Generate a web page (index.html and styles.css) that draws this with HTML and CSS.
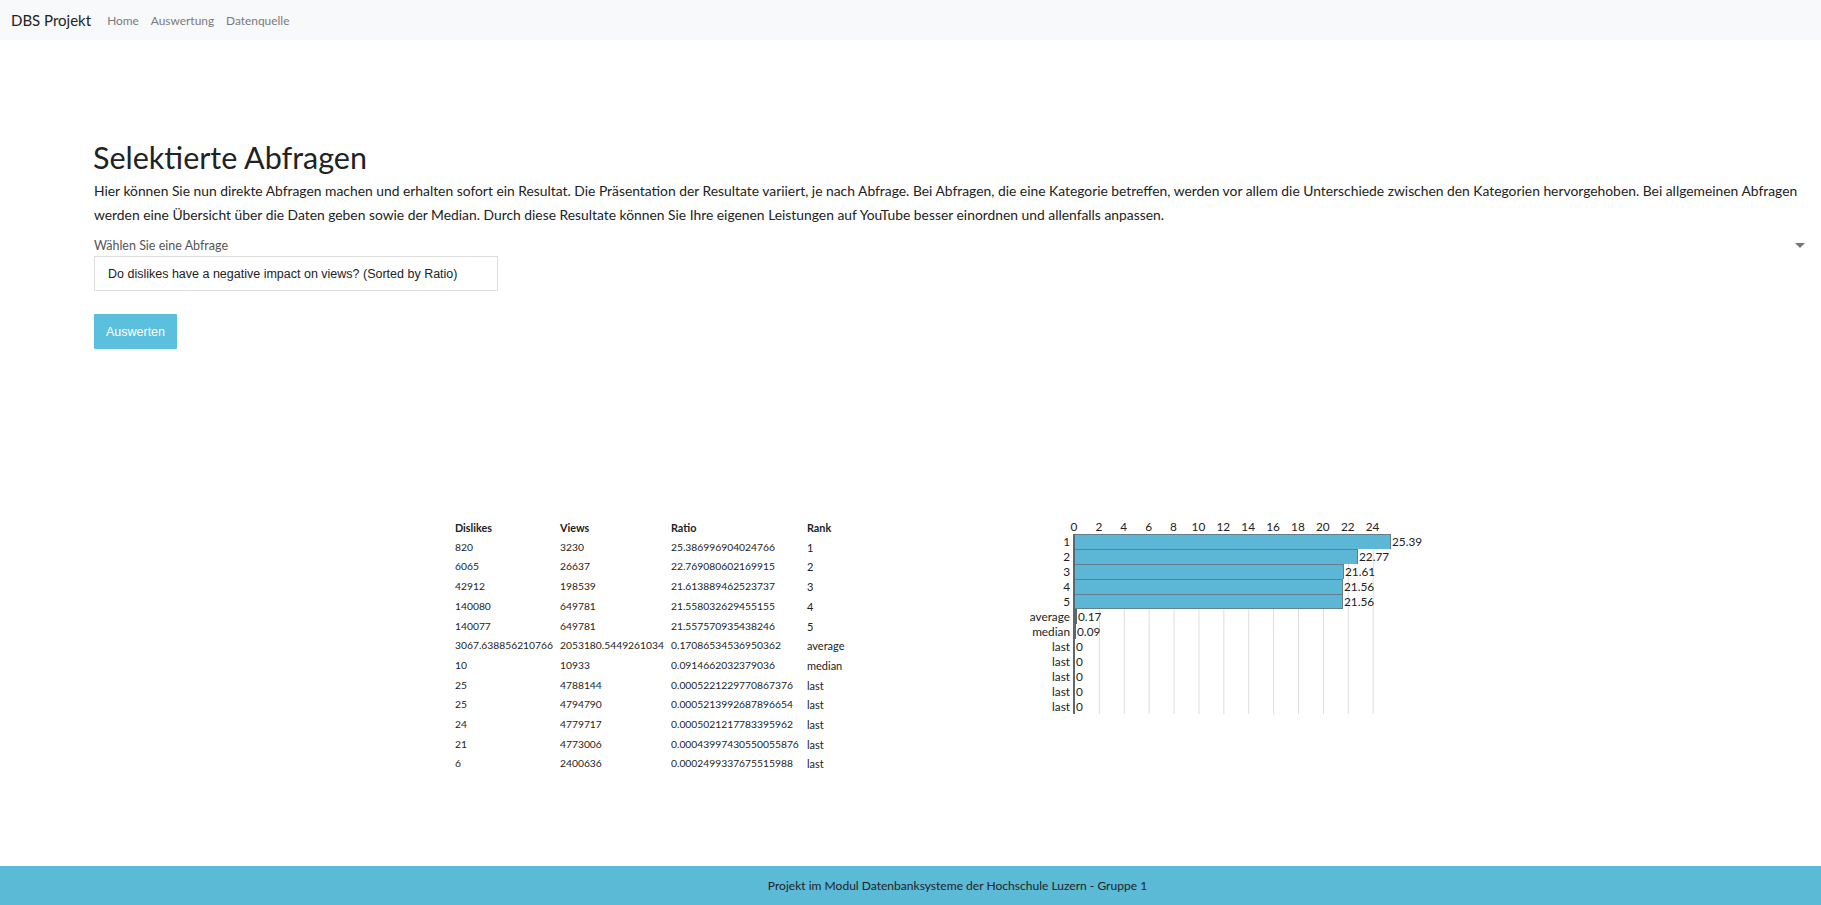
FILE: index.html
```html
<!DOCTYPE html>
<html lang="de">
<head>
<meta charset="utf-8">
<title>DBS Projekt</title>
<link rel="stylesheet" href="styles.css">
</head>
<body>
<nav class="navbar">
  <span class="brand">DBS Projekt</span>
  <a class="nav-link" href="#">Home</a>
  <a class="nav-link" href="#">Auswertung</a>
  <a class="nav-link" href="#">Datenquelle</a>
</nav>

<main class="main">
  <h1 class="title">Selektierte Abfragen</h1>
  <p class="lead">Hier können Sie nun direkte Abfragen machen und erhalten sofort ein Resultat. Die Präsentation der Resultate variiert, je nach Abfrage. Bei Abfragen, die eine Kategorie betreffen, werden vor allem die Unterschiede zwischen den Kategorien hervorgehoben. Bei allgemeinen Abfragen werden eine Übersicht über die Daten geben sowie der Median. Durch diese Resultate können Sie Ihre eigenen Leistungen auf YouTube besser einordnen und allenfalls anpassen.</p>

  <div class="label-row">
    <span class="label">Wählen Sie eine Abfrage</span>
    <span class="caret"></span>
  </div>
  <div class="select-box">Do dislikes have a negative impact on views? (Sorted by Ratio)</div>
  <button class="btn">Auswerten</button>

  <section class="results">
    <table class="data-table">
      <colgroup>
        <col class="c1"><col class="c2"><col class="c3"><col class="c4">
      </colgroup>
      <thead>
        <tr><th>Dislikes</th><th>Views</th><th>Ratio</th><th>Rank</th></tr>
      </thead>
      <tbody>
        <tr><td>820</td><td>3230</td><td>25.386996904024766</td><td>1</td></tr>
        <tr><td>6065</td><td>26637</td><td>22.769080602169915</td><td>2</td></tr>
        <tr><td>42912</td><td>198539</td><td>21.613889462523737</td><td>3</td></tr>
        <tr><td>140080</td><td>649781</td><td>21.558032629455155</td><td>4</td></tr>
        <tr><td>140077</td><td>649781</td><td>21.557570935438246</td><td>5</td></tr>
        <tr><td>3067.638856210766</td><td>2053180.5449261034</td><td>0.17086534536950362</td><td>average</td></tr>
        <tr><td>10</td><td>10933</td><td>0.0914662032379036</td><td>median</td></tr>
        <tr><td>25</td><td>4788144</td><td>0.0005221229770867376</td><td>last</td></tr>
        <tr><td>25</td><td>4794790</td><td>0.0005213992687896654</td><td>last</td></tr>
        <tr><td>24</td><td>4779717</td><td>0.0005021217783395962</td><td>last</td></tr>
        <tr><td>21</td><td>4773006</td><td>0.00043997430550055876</td><td>last</td></tr>
        <tr><td>6</td><td>2400636</td><td>0.0002499337675515988</td><td>last</td></tr>
      </tbody>
    </table>

    <div class="chart">
      <div class="ticks">
        <span>0</span><span>2</span><span>4</span><span>6</span><span>8</span><span>10</span><span>12</span><span>14</span><span>16</span><span>18</span><span>20</span><span>22</span><span>24</span>
      </div>
      <div class="chart-row"><span class="cat">1</span><div class="plot"><div class="bar" style="width:316px"></div><span class="val">25.39</span></div></div>
      <div class="chart-row"><span class="cat">2</span><div class="plot"><div class="bar" style="width:283px"></div><span class="val">22.77</span></div></div>
      <div class="chart-row"><span class="cat">3</span><div class="plot"><div class="bar" style="width:269px"></div><span class="val">21.61</span></div></div>
      <div class="chart-row"><span class="cat">4</span><div class="plot"><div class="bar" style="width:268px"></div><span class="val">21.56</span></div></div>
      <div class="chart-row"><span class="cat">5</span><div class="plot"><div class="bar bar-end" style="width:268px"></div><span class="val">21.56</span></div></div>
      <div class="chart-row"><span class="cat">average</span><div class="plot"><div class="bar bar-tiny" style="width:2px"></div><span class="val">0.17</span></div></div>
      <div class="chart-row"><span class="cat">median</span><div class="plot"><div class="bar bar-tiny" style="width:1px"></div><span class="val">0.09</span></div></div>
      <div class="chart-row"><span class="cat">last</span><div class="plot"><span class="val">0</span></div></div>
      <div class="chart-row"><span class="cat">last</span><div class="plot"><span class="val">0</span></div></div>
      <div class="chart-row"><span class="cat">last</span><div class="plot"><span class="val">0</span></div></div>
      <div class="chart-row"><span class="cat">last</span><div class="plot"><span class="val">0</span></div></div>
      <div class="chart-row"><span class="cat">last</span><div class="plot"><span class="val">0</span></div></div>
    </div>
  </section>
</main>

<footer class="footer">Projekt im Modul Datenbanksysteme der Hochschule Luzern - Gruppe 1</footer>
</body>
</html>
```

FILE: styles.css
```css
* { box-sizing: border-box; }

html, body {
  margin: 0;
  padding: 0;
}

body {
  font-family: "Lato", "Open Sans", sans-serif;
  color: #222;
  background: #fff;
  min-height: 100vh;
  display: flex;
  flex-direction: column;
}

.navbar {
  height: 40px;
  background: #f8f9fa;
  display: flex;
  align-items: center;
  padding-left: 11px;
  gap: 12px;
}

.brand {
  font-size: 15px;
  color: #222;
  margin-right: 4px;
}

.nav-link {
  font-size: 11.9px;
  color: #7a7a7a;
  text-decoration: none;
}

.main {
  flex: 1;
  padding: 0 15px 0 94px;
}

.title {
  font-size: 30.5px;
  font-weight: 400;
  line-height: 38px;
  margin: 98px 0 0 -1px;
  color: #222;
}

.lead {
  font-size: 13.85px;
  line-height: 24px;
  margin: 3px 0 0;
  color: #222;
}

.label-row {
  display: flex;
  justify-content: space-between;
  align-items: center;
  margin-top: 8px;
  height: 20px;
}

.label {
  font-size: 12.5px;
  color: #555;
}

.caret {
  width: 0;
  height: 0;
  border-left: 5px solid transparent;
  border-right: 5px solid transparent;
  border-top: 5px solid #777;
  margin-right: 1px;
}

.select-box {
  width: 404px;
  height: 35px;
  margin-top: 1px;
  border: 1px solid #ddd;
  font-family: "Liberation Sans", Arial, sans-serif;
  font-size: 12.5px;
  color: #222;
  padding-left: 13px;
  display: flex;
  align-items: center;
  white-space: nowrap;
}

.btn {
  display: block;
  margin-top: 23px;
  width: 83px;
  height: 35px;
  border: none;
  border-radius: 1px;
  background: #5bc0de;
  color: #fff;
  font-family: "Liberation Sans", Arial, sans-serif;
  font-size: 12.5px;
  padding: 0;
}

.results {
  display: flex;
  align-items: flex-start;
  margin-top: 170px;
  padding-left: 358px;
  padding-bottom: 40px;
}

.data-table {
  border-collapse: collapse;
  table-layout: fixed;
  width: 400px;
  font-size: 10.3px;
  color: #222;
  margin-top: -1px;
}

.c1 { width: 105px; }
.c2 { width: 111px; }
.c3 { width: 136px; }
.c4 { width: 48px; }

.data-table th,
.data-table td {
  padding: 0 0 0 3px;
  height: 19.7px;
  line-height: 19.7px;
  text-align: left;
  white-space: nowrap;
}

.data-table td:last-child {
  font-size: 11px;
}

.data-table th {
  font-weight: 700;
  font-size: 10.8px;
}

.chart {
  margin-left: 159px;
  font-size: 11.8px;
  color: #222;
}

.ticks {
  display: flex;
  margin-left: 50.5px;
  height: 15px;
  line-height: 15px;
}

.ticks span {
  width: 24.9px;
  text-align: center;
  flex: none;
}

.chart-row {
  display: flex;
  height: 15px;
  line-height: 15px;
}

.cat {
  width: 62px;
  flex: none;
  text-align: right;
  padding-right: 3px;
}

.plot {
  width: 301px;
  flex: none;
  display: flex;
  align-items: stretch;
  border-left: 2px solid #5c6770;
  background-image: linear-gradient(to right, transparent 24px, #dddddd 24px, #dddddd 25px, transparent 25px);
  background-size: 24.9px 100%;
  background-repeat: repeat-x;
  white-space: nowrap;
}

.bar {
  flex: none;
  height: 15px;
  background: #5bb7d5;
  border-top: 1px solid #617f8d;
  border-right: 1px solid #617f8d;
}

.bar-end {
  border-bottom: 1px solid #617f8d;
}

.bar-tiny {
  background: #5c6770;
  border: none;
}

.val {
  margin-left: 1px;
}

.footer {
  height: 39px;
  background: #5bbad6;
  display: flex;
  align-items: center;
  justify-content: center;
  padding-left: 94px;
  font-size: 12.05px;
  color: #222;
}
```
